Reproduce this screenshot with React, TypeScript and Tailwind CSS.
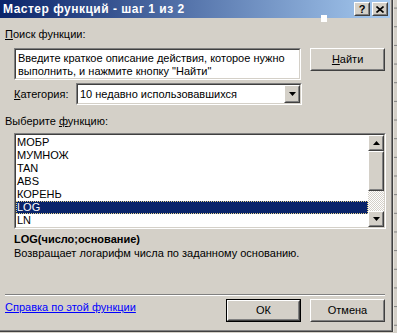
import React from 'react'

const font = "font-['Liberation_Sans',Arial,sans-serif]"

function Raised({ className = '', children }: { className?: string; children?: React.ReactNode }) {
  return (
    <div className={`border border-t-white border-l-white border-b-[#404040] border-r-[#404040] bg-[#d4d0c8] ${className}`}>
      <div className="flex h-full w-full items-center justify-center border border-t-[#d4d0c8] border-l-[#d4d0c8] border-b-[#808080] border-r-[#808080]">
        {children}
      </div>
    </div>
  )
}

function Sunken({ className = '', children }: { className?: string; children?: React.ReactNode }) {
  return (
    <div className={`border border-t-[#808080] border-l-[#808080] border-b-white border-r-white ${className}`}>
      <div className="h-full w-full border border-t-[#404040] border-l-[#404040] border-b-[#d4d0c8] border-r-[#d4d0c8] bg-white">
        {children}
      </div>
    </div>
  )
}

function Arrow({ down }: { down?: boolean }) {
  return (
    <svg width="7" height="4" viewBox="0 0 7 4" className="block">
      <polygon points={down ? '0,0 7,0 3.5,4' : '0,4 7,4 3.5,0'} fill="#000" />
    </svg>
  )
}

function DialogButton({ label, def }: { label: React.ReactNode; def?: boolean }) {
  const btn = (
    <Raised className="h-full w-full">
      <span className="text-[11px] leading-[13px] text-black">{label}</span>
    </Raised>
  )
  if (def) return <div className="h-[23px] w-[75px] border border-black">{btn}</div>
  return <div className="h-[23px] w-[75px]">{btn}</div>
}

const items = ['МОБР', 'МУМНОЖ', 'TAN', 'ABS', 'КОРЕНЬ', 'LOG', 'LN']

export default function App() {
  return (
    <div className={`flex h-[333px] w-[397px] flex-col overflow-hidden bg-[#d4d0c8] ${font}`}>
      <div className="flex">
        <div className="h-[332px] w-[393px] border-r border-b border-[#404040]">
          <div className="relative flex h-full w-full flex-col border-r border-b border-[#808080] pr-[1px]">
            {/* title bar */}
            <div className="flex h-[18px] items-start bg-[linear-gradient(to_right,#0a246a,#a6caf0)] pr-[2px]">
              <span className="ml-[3px] mt-[3px] text-[12px] font-bold leading-[13px] tracking-[0.5px] text-white">
                Мастер функций - шаг 1 из 2
              </span>
              <div className="ml-auto mt-[2px] flex gap-[2px]">
                <Raised className="h-[14px] w-[16px]">
                  <span className="text-[11px] font-bold leading-[10px] text-black">?</span>
                </Raised>
                <Raised className="h-[14px] w-[16px]">
                  <svg width="8" height="7" viewBox="0 0 8 7">
                    <path d="M0.5 0.5 L7.5 6.5 M7.5 0.5 L0.5 6.5" stroke="#000" strokeWidth="1.6" />
                  </svg>
                </Raised>
              </div>
            </div>
            <div className="absolute left-[321px] top-[15px] h-[7px] w-[6px] bg-white" />

            <div className="flex flex-1 flex-col px-[5px] text-[11px] leading-[13px] text-black">
              <div className="mt-[10px]">
                <u>П</u>оиск функции:
              </div>
              <div className="ml-[9px] mt-[7px] flex items-start gap-[9px]">
                <Sunken className="h-[32px] w-[288px]">
                  <div className="overflow-hidden pl-[2px] pt-[2px] whitespace-nowrap">
                    Введите краткое описание действия, которое нужно
                    <br />
                    выполнить, и нажмите кнопку "Найти"
                  </div>
                </Sunken>
                <DialogButton label={<><u>Н</u>айти</>} />
              </div>
              <div className="ml-[9px] mt-[3px] flex items-center">
                <span className="w-[62px]">
                  <u>К</u>атегория:
                </span>
                <Sunken className="h-[22px] w-[226px]">
                  <div className="flex h-full items-center">
                    <span className="pl-[2px]">10 недавно использовавшихся</span>
                    <Raised className="ml-auto h-[18px] w-[16px]">
                      <Arrow down />
                    </Raised>
                  </div>
                </Sunken>
              </div>
              <div className="mt-[10px]">
                Выберите <u>ф</u>ункцию:
              </div>
              <Sunken className="ml-[9px] mt-[5px] h-[96px] w-[372px]">
                <div className="flex h-full">
                  <div className="flex-1 pt-[1px]">
                    {items.map((it) =>
                      it === 'LOG' ? (
                        <div key={it} className="h-[13px] border border-dotted border-[#e6d38a] bg-[#0a246a] pl-0 leading-[11px] text-white">
                          {it}
                        </div>
                      ) : (
                        <div key={it} className="h-[13px] pl-[1px]">
                          {it}
                        </div>
                      )
                    )}
                  </div>
                  <div className="flex w-[16px] flex-col">
                    <Raised className="h-[16px] w-[16px]">
                      <Arrow />
                    </Raised>
                    <Raised className="h-[40px] w-[16px]" />
                    <div className="flex-1 bg-[repeating-conic-gradient(#d4d0c8_0_25%,#ffffff_0_50%)] bg-[length:2px_2px]" />
                    <Raised className="h-[16px] w-[16px]">
                      <Arrow down />
                    </Raised>
                  </div>
                </div>
              </Sunken>
              <div className="ml-[9px] mt-[4px] font-bold">LOG(число;основание)</div>
              <div className="ml-[9px] mt-[1px]">Возвращает логарифм числа по заданному основанию.</div>
              <div className="mt-[34px] h-[2px] border-t border-b border-t-[#808080] border-b-white" />
              <div className="mt-[3px] flex items-start">
                <a href="#" className="mt-[2px] text-[#0000ff] underline">
                  Справка по этой функции
                </a>
                <div className="ml-auto flex gap-[9px]">
                  <DialogButton label="ОК" def />
                  <DialogButton label="Отмена" />
                </div>
              </div>
            </div>
          </div>
        </div>
        <div className="h-[332px] flex-1 border-l border-[#e8e6e0] bg-[#d4d0c8] bg-[linear-gradient(to_bottom,#808080_1px,transparent_1px)] bg-[length:100%_18.67px] bg-[position:0_7.6px]" />
      </div>
    </div>
  )
}
